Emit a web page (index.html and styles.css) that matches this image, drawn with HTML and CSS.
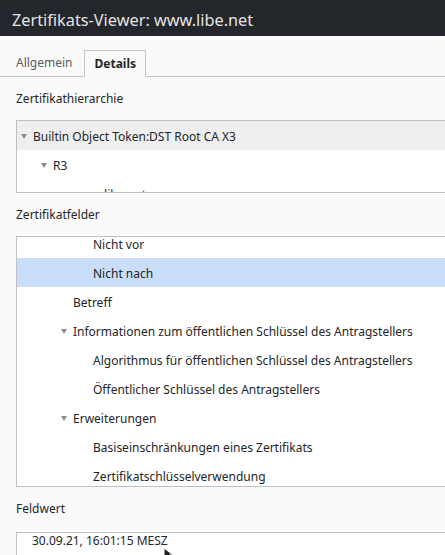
FILE: index.html
```html
<!DOCTYPE html>
<html lang="de">
<head>
<meta charset="utf-8">
<title>Zertifikats-Viewer</title>
<link rel="stylesheet" href="styles.css">
</head>
<body>
<div class="titlebar">Zertifikats-Viewer: www.libe.net</div>
<div class="tabs">
  <div class="tab">Allgemein</div>
  <div class="tab active">Details</div>
  <div class="tab-rest"></div>
</div>
<div class="content">
  <div class="label">Zertifikathierarchie</div>
  <div class="box tree">
    <div class="row hover l1"><span class="arrow"></span>Builtin Object Token:DST Root CA X3</div>
    <div class="row l2"><span class="arrow"></span>R3</div>
    <div class="row l3">www.libe.net</div>
  </div>
  <div class="label">Zertifikatfelder</div>
  <div class="box fields">
    <div class="list">
      <div class="row l4">Nicht vor</div>
      <div class="row l4 selected">Nicht nach</div>
      <div class="row l3">Betreff</div>
      <div class="row l3a"><span class="arrow"></span>Informationen zum öffentlichen Schlüssel des Antragstellers</div>
      <div class="row l4">Algorithmus für öffentlichen Schlüssel des Antragstellers</div>
      <div class="row l4">Öffentlicher Schlüssel des Antragstellers</div>
      <div class="row l3a"><span class="arrow"></span>Erweiterungen</div>
      <div class="row l4">Basiseinschränkungen eines Zertifikats</div>
      <div class="row l4">Zertifikatschlüsselverwendung</div>
    </div>
  </div>
  <div class="label">Feldwert</div>
  <div class="box value">30.09.21, 16:01:15 MESZ</div>
</div>
<svg class="cursor" width="10" height="14" viewBox="0 0 10 14"><path d="M1 1 L1 12 L4 9 L6 13 L8 12 L6 8 L10 8 Z" fill="#222" stroke="#fff" stroke-width="1"/></svg>
</body>
</html>
```
FILE: styles.css
```css
html, body {
  margin: 0;
  padding: 0;
  height: 555px;
  overflow: hidden;
}
body {
  background: #fafafa;
  font-family: "Noto Sans", "DejaVu Sans", sans-serif;
  font-size: 12px;
  color: #232627;
  position: relative;
}
.titlebar {
  height: 36px;
  background: #23272b;
  color: #e3e3e3;
  font-size: 16.3px;
  line-height: 36px;
  padding-left: 12px;
  box-sizing: border-box;
  padding-top: 2px;
}
.tabs {
  display: flex;
  align-items: flex-end;
  height: 41px;
  box-sizing: border-box;
  padding-top: 14px;
}
.tab {
  height: 27px;
  line-height: 26px;
  padding: 0 11px;
  box-sizing: border-box;
  border-bottom: 1px solid #c4c4c4;
  color: #5b5d60;
}
.tab:first-child {
  padding-left: 16px;
  padding-right: 11px;
}
.tab.active {
  font-weight: bold;
  color: #232627;
  border: 1px solid #c4c4c4;
  border-bottom: 1px solid #fafafa;
  padding: 0 9px 0 10px;
}
.tab-rest {
  flex: 1;
  border-bottom: 1px solid #c4c4c4;
}
.content {
  padding-left: 16px;
}
.label {
  line-height: 18px;
  margin-top: 13px;
  margin-bottom: 12px;
}
.box {
  border: 1px solid #c0c0c0;
  border-right: none;
  background: #fff;
  overflow: hidden;
}
.tree {
  height: 71px;
}
.row {
  height: 29px;
  line-height: 29px;
  white-space: nowrap;
  display: flex;
  align-items: center;
  padding-top: 1px;
  box-sizing: border-box;
}
.hover {
  background: #efefef;
}
.selected {
  background: #c9def8;
}
.arrow {
  width: 0;
  height: 0;
  border-left: 3.5px solid transparent;
  border-right: 3.5px solid transparent;
  border-top: 5px solid #8b8c8e;
  margin-right: 6px;
}
.l1 { padding-left: 4px; }
.l2 { padding-left: 24px; }
.l3 { padding-left: 56px; }
.l3a { padding-left: 44px; }
.l4 { padding-left: 76px; }
.fields {
  height: 249px;
}
.list {
  margin-top: -8px;
}
.value {
  height: 40px;
  padding-left: 15px;
  line-height: 16px;
  margin-top: 14px;
}
.cursor {
  position: absolute;
  left: 163px;
  top: 547px;
}
```
